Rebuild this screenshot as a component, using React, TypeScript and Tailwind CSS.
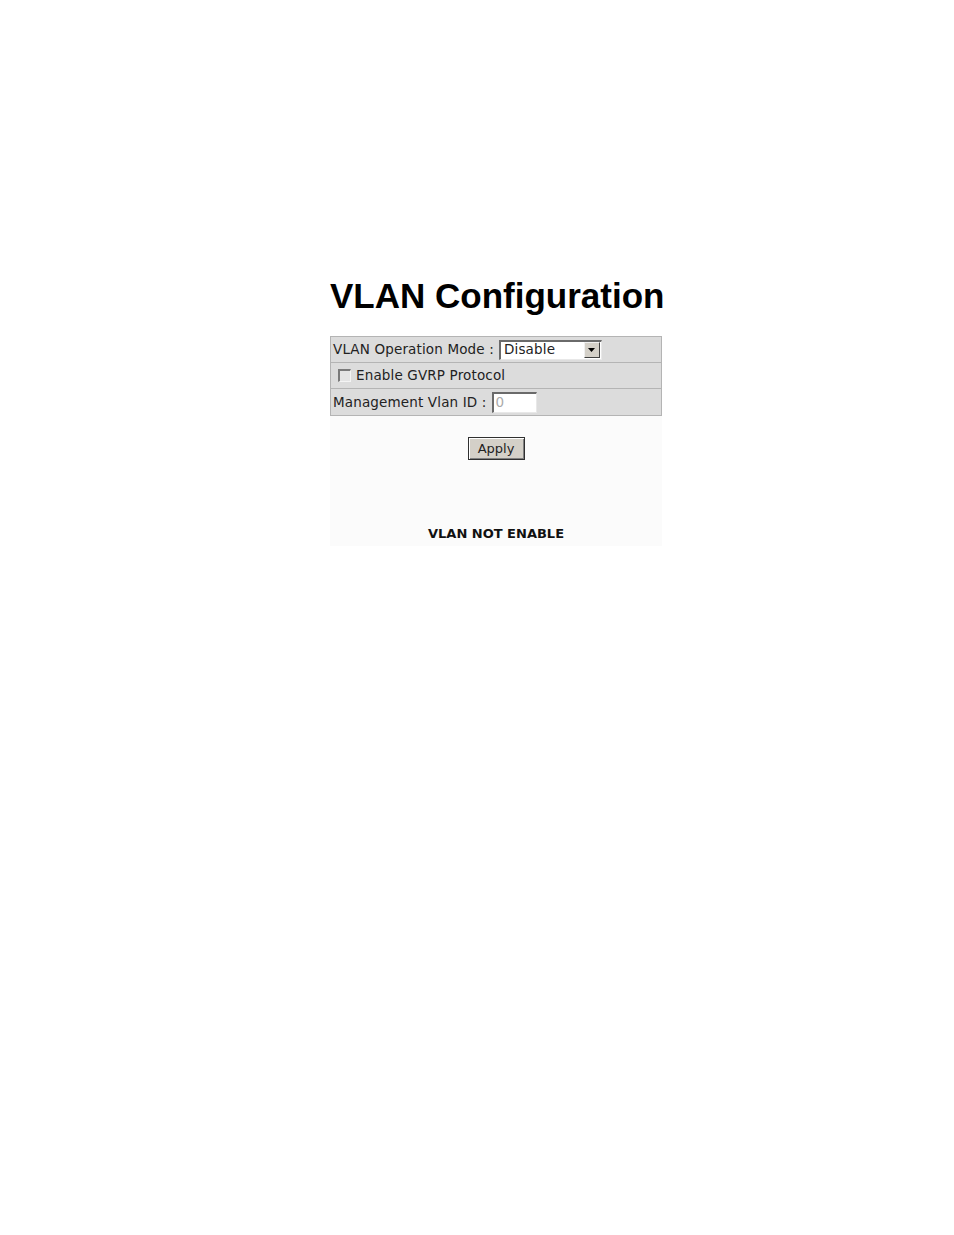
export default function App() {
  return (
    <div className="min-h-[1235px] bg-white pl-[330px] pt-[276px]">
      <h1 className="font-['Liberation_Sans',Arial,sans-serif] text-[35px] font-bold leading-[40px] text-black">
        VLAN Configuration
      </h1>

      <div className="mt-[20px] w-[332px] font-['DejaVu_Sans',Verdana,sans-serif] text-[13px] text-[#222]">
        <div className="border border-[#b4b4b4] bg-[#dcdcdc] text-[13.5px] tracking-[0.15px]">
          <div className="flex h-[26px] items-center border-b border-[#b4b4b4] pl-[2px]">
            <span>VLAN Operation Mode :</span>
            <div className="ml-[5px] flex h-[20px] w-[103px] items-center border-t-2 border-l-2 border-t-[#6a6a6a] border-l-[#6a6a6a] border-r border-b border-r-[#e8e8e8] border-b-[#e8e8e8] bg-white">
              <span className="flex-1 pl-[3px] leading-none">Disable</span>
              <span className="mr-[1px] flex h-[16px] w-[16px] items-center justify-center border border-t-[#f0f0f0] border-l-[#f0f0f0] border-r-[#404040] border-b-[#404040] bg-[#d4d0c8]">
                <svg width="7" height="4" viewBox="0 0 7 4">
                  <path d="M0 0h7L3.5 4z" fill="#000" />
                </svg>
              </span>
            </div>
          </div>

          <div className="flex h-[26px] items-center border-b border-[#b4b4b4] pl-[7px]">
            <span className="h-[13px] w-[13px] border-t-2 border-l-2 border-t-[#7a7a7a] border-l-[#7a7a7a] border-r border-b border-r-[#f4f4f4] border-b-[#f4f4f4] bg-[#e4e4e4]" />
            <span className="ml-[5px]">Enable GVRP Protocol</span>
          </div>

          <div className="flex h-[26px] items-center pl-[2px]">
            <span>Management Vlan ID :</span>
            <div className="ml-[5px] flex h-[21px] w-[45px] items-center border-t-2 border-l-2 border-t-[#6a6a6a] border-l-[#6a6a6a] border-r border-b border-r-[#e8e8e8] border-b-[#e8e8e8] bg-white pl-[2px] text-[#aaa]">
              0
            </div>
          </div>
        </div>

        <div className="flex h-[130px] flex-col items-center bg-[#fbfbfb] pt-[21px]">
          <button
            type="button"
            className="flex h-[23px] w-[57px] items-center justify-center border border-[#303030] bg-[#d4d0c8] text-[13px] leading-none text-[#222] shadow-[inset_1px_1px_0_#fff,inset_-1px_-1px_0_#808080]"
          >
            Apply
          </button>
          <p className="mt-[67px] text-[13px] font-bold leading-none text-[#111]">
            VLAN NOT ENABLE
          </p>
        </div>
      </div>
    </div>
  );
}
